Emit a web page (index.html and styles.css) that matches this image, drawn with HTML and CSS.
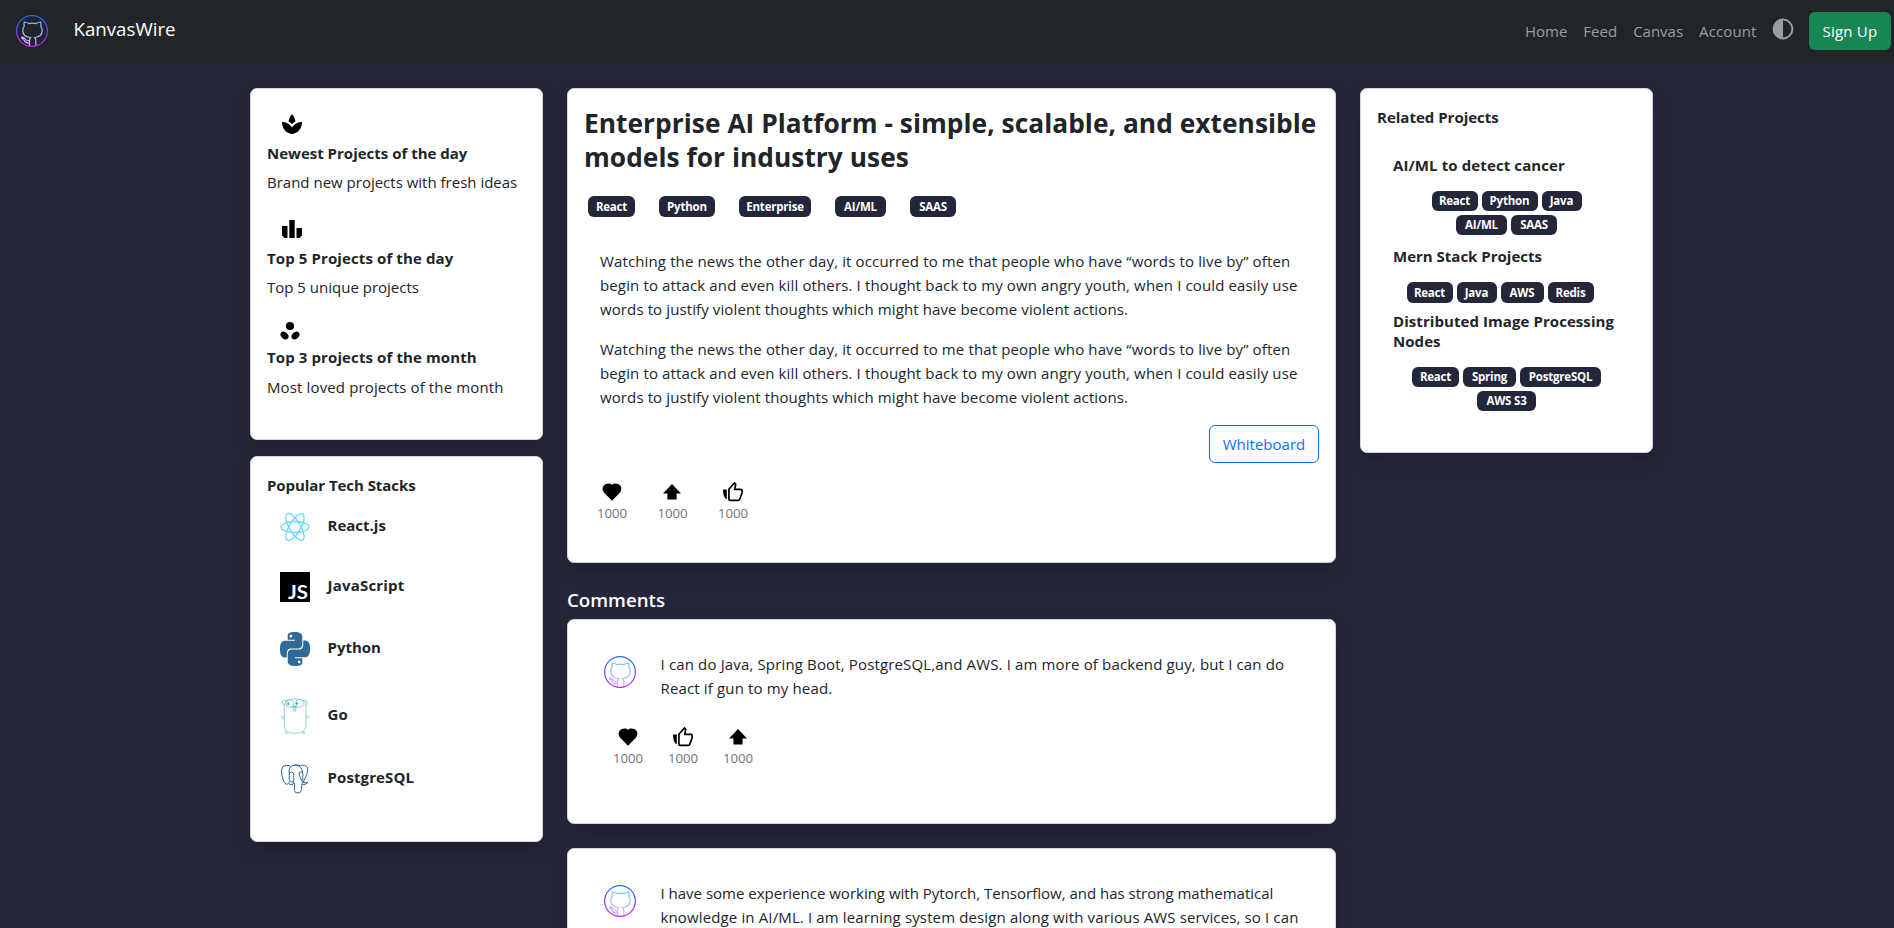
FILE: index.html
```html
<!DOCTYPE html>
<html lang="en">
<head>
<meta charset="utf-8">
<title>KanvasWire</title>
<link rel="stylesheet" href="styles.css">
</head>
<body>
<svg class="defs" width="0" height="0" aria-hidden="true">
  <defs>
    <linearGradient id="ring" x1="0" y1="0" x2="0" y2="1"><stop offset="0" stop-color="#1a6dff"/><stop offset="1" stop-color="#c822ff"/></linearGradient>
    <linearGradient id="cat" gradientUnits="userSpaceOnUse" x1="0" y1="6" x2="0" y2="32"><stop offset="0" stop-color="#6dc7ff"/><stop offset="1" stop-color="#e6abff"/></linearGradient>
    <symbol id="octo" viewBox="0 0 32 32">
      <path d="M13.500 31V25.500Q13.500 23.500 14.500 22.500C9.500 22 6.800 19.500 6.800 15.500Q6.800 13 8.300 11.200Q7.600 9 8.300 7Q10.500 7 12.800 8.600Q16.500 7.800 20.200 8.600Q22.500 7 24.700 7Q25.400 9 24.700 11.200Q26.200 13 26.200 15.500C26.200 19.500 23.500 22 18.700 22.500Q19.800 23.500 19.800 25.500V31M13.500 28Q9.500 28.200 8.300 25.500Q7.300 23.500 5 23.200M13.500 25.800Q10.500 26 9.200 24Q8.200 22.200 5.500 21.800" fill="none" stroke="url(#cat)" stroke-width="1.200"/>
      <circle cx="16" cy="16" r="15.400" fill="none" stroke="url(#ring)" stroke-width="1.200"/>
    </symbol>
    <symbol id="heart" viewBox="0 0 24 24"><path d="M12 20.700L4.200 12.800C1.600 10 2.300 5.500 5.700 4.100C8 3.200 10.500 3.400 12 4.900C13.500 3.400 16 3.200 18.300 4.100C21.700 5.500 22.400 10 19.800 12.800Z"/></symbol>
    <symbol id="arrow" viewBox="0 0 24 24"><path d="M12 4L21 13.600H16.600V19.500H7.400V13.600H3Z"/></symbol>
    <symbol id="thumb" viewBox="0 0 24 24"><path d="M9 20.300H17.200Q18.300 20.300 18.700 19.200L21.100 12.800V10.600Q21.100 9.400 19.900 9.400H13.700L14.700 4.300L13.400 3L7.900 9.200V19.200Q7.900 20.300 9 20.300Z" fill="none" stroke="#000" stroke-width="1.700"/><path d="M2 9.500H5.800V19H5C3 17.500 2 14 2 9.500Z"/></symbol>
  </defs>
</svg>

<header class="nav">
  <svg class="avatar"><use href="#octo"/></svg>
  <span class="brand">KanvasWire</span>
  <nav class="links"><a>Home</a><a>Feed</a><a>Canvas</a><a class="s1">Account</a></nav>
  <svg class="contrast" viewBox="0 0 22 22"><circle cx="11" cy="11" r="9.400" fill="none" stroke="#9b9d9f" stroke-width="2"/><path d="M11 1A10 10 0 0 0 11 21Z" fill="#9b9d9f"/></svg>
  <button class="signup s3">Sign Up</button>
</header>

<main class="page">
  <aside class="side">
    <section class="card highlights">
      <div class="hl">
        <svg class="ic" viewBox="0 0 24 24"><path d="M12 2C10.100 4.300 8.900 6.900 8.600 9.600C9.800 10.200 11 11 12 12.200C13 11 14.200 10.200 15.400 9.600C15.100 6.900 13.900 4.300 12 2ZM12 15.500C9.900 12.200 6.200 10 2 10C2 15.500 5 20 9.800 21.600C11.200 22.100 12.800 22.100 14.200 21.600C19 20 22 15.500 22 10C17.800 10 14.100 12.200 12 15.500Z"/></svg>
        <h4>Newest Projects of the day</h4><p>Brand new projects with fresh ideas</p>
      </div>
      <div class="hl">
        <svg class="ic" viewBox="0 0 24 24"><path d="M2 9H7.500V21H4.500L2 18.500ZM9.300 3H14.700V21H9.300ZM16.500 11H22V18.500L19.500 21H16.500Z"/></svg>
        <h4 class="s1">Top 5 Projects of the day</h4><p>Top 5 unique projects</p>
      </div>
      <div class="hl last">
        <svg class="ic" viewBox="0 0 24 24"><circle cx="12" cy="8" r="4.100"/><ellipse cx="6.500" cy="17.500" rx="4.500" ry="3.200" transform="rotate(42 6.500 17.500)"/><ellipse cx="17.500" cy="17.500" rx="4.500" ry="3.200" transform="rotate(-42 17.500 17.500)"/></svg>
        <h4 class="s1">Top 3 projects of the month</h4><p class="s2">Most loved projects of the month</p>
      </div>
    </section>

    <section class="card stacks">
      <h4 class="n1">Popular Tech Stacks</h4>
      <div class="tech">
        <svg width="30" height="30" viewBox="0 0 30 30" fill="none" stroke="#61dafb" stroke-width="1.300"><ellipse cx="15" cy="15" rx="14" ry="5.500"/><ellipse cx="15" cy="15" rx="15.300" ry="5.600" transform="rotate(60 15 15)"/><ellipse cx="15" cy="15" rx="15.300" ry="5.600" transform="rotate(120 15 15)"/></svg>
        <h4>React.js</h4>
      </div>
      <div class="tech">
        <svg width="30" height="30" viewBox="0 0 30 30"><path d="M0 0H30V30H0Z"/><text class="js" x="8" y="27.300" textLength="20" lengthAdjust="spacingAndGlyphs">JS</text></svg>
        <h4 class="s3">JavaScript</h4>
      </div>
      <div class="tech py">
        <svg width="30" height="34" viewBox="0 0 24 24" preserveAspectRatio="none" fill="#306998"><path d="M14.250.18l.9.2.73.26.59.3.45.32.34.34.25.34.16.33.1.3.04.26.02.2-.01.13V8.500l-.05.63-.13.55-.21.46-.26.38-.3.31-.33.25-.35.19-.35.14-.33.1-.3.07-.26.04-.21.02H8.770l-.69.05-.59.14-.5.22-.41.27-.33.32-.27.35-.2.36-.15.37-.1.35-.07.32-.04.27-.02.21v3.060H3.170l-.21-.03-.28-.07-.32-.12-.35-.18-.36-.26-.36-.36-.35-.46-.32-.59-.28-.73-.21-.88-.14-1.050-.05-1.230.06-1.220.16-1.040.24-.87.32-.71.36-.57.4-.44.42-.33.42-.24.4-.16.36-.1.32-.05.24-.01h.16l.06.01h8.160v-.83H6.180l-.01-2.750-.02-.37.05-.34.11-.31.17-.28.25-.26.31-.23.38-.2.44-.18.51-.15.58-.12.64-.1.71-.06.77-.04.84-.02 1.270.05zm-6.300 1.980l-.23.33-.08.41.08.41.23.34.33.22.41.09.41-.09.33-.22.23-.34.08-.41-.08-.41-.23-.33-.33-.22-.41-.09-.41.09zm13.090 3.950l.28.06.32.12.35.18.36.27.36.35.35.47.32.59.28.73.21.88.14 1.040.05 1.230-.06 1.230-.16 1.040-.24.86-.32.71-.36.57-.4.45-.42.33-.42.24-.4.16-.36.09-.32.05-.24.02-.16-.01h-8.220v.82h5.840l.01 2.760.02.36-.05.34-.11.31-.17.29-.25.25-.31.24-.38.2-.44.17-.51.15-.58.13-.64.09-.71.07-.77.04-.84.01-1.270-.04-1.070-.14-.9-.2-.73-.25-.59-.3-.45-.33-.34-.34-.25-.34-.16-.33-.1-.3-.04-.25-.02-.2.01-.13v-5.340l.05-.64.13-.54.21-.46.26-.38.3-.32.33-.24.35-.2.35-.14.33-.1.3-.06.26-.04.21-.02.13-.01h5.840l.69-.05.59-.14.5-.21.41-.28.33-.32.27-.35.2-.36.15-.36.1-.35.07-.32.04-.28.02-.21V6.070h2.090l.14.01zm-6.470 14.250l-.23.33-.08.41.08.41.23.33.33.23.41.08.41-.08.33-.23.23-.33.08-.41-.08-.41-.23-.33-.33-.23-.41-.08-.41.08z"/></svg>
        <h4>Python</h4>
      </div>
      <div class="tech go">
        <svg width="30" height="36" viewBox="0 0 30 36" fill="none" stroke="#76c7d6" stroke-width=".8"><path d="M5 4Q10 .7 15 .7Q21 .7 25 4Q26.500 7 26 14V28Q25.500 35.300 15 35.300Q4.500 35.300 4.300 28V12Q3.500 7 5 4ZM5 7.500Q1.500 6 2.200 3.300Q4 .8 6.800 2.800M25.500 7.500Q28 6 27.300 3.300Q25.500 .8 22.800 2.800M4.200 18.500Q1 18.300 1.500 20Q2.500 21.200 4.200 20.500M26 18Q28.600 17.500 28.400 19.200Q27.800 20.500 26 20M6.500 32.500Q4 34.500 5.200 35.500Q6.500 36 8 34M23 33Q25.500 34.500 24.600 35.500Q23 36 21.500 34.500"/><circle cx="9.800" cy="5.600" r="4"/><circle cx="19.600" cy="5.400" r="4"/><path d="M12.500 9.500Q14.600 7.700 16.700 9.500Q17 11 14.700 11Q12.300 11 12.500 9.500ZM13.300 11V12.800H15.700V11"/><circle cx="8.300" cy="5.700" r="1.200" fill="#2db1cc" stroke="none"/><circle cx="17" cy="5.500" r="1.200" fill="#2db1cc" stroke="none"/><ellipse cx="14.600" cy="8.700" rx="1.300" ry=".9" fill="#2db1cc" stroke="none"/></svg>
        <h4 class="s3">Go</h4>
      </div>
      <div class="tech">
        <svg width="30" height="30" viewBox="0 0 30 30" fill="none" stroke="#336791" stroke-width="1"><path d="M10.500 2Q6 .3 2.800 2.500Q.6 5 2 11.500Q3.800 19.300 6.200 20.300Q7.500 20.500 10 17.500M10.500 17.500Q8.700 16 9.200 13Q9.600 10 9 7Q9.500 1.700 14.500 1.200Q20 .8 22 6Q23.500 10 22.800 13.500Q22.500 16.500 23.500 18.500M12 1.500Q17 .2 20.500 1.700Q25 .3 27.300 3Q28.700 6.500 25 14.500Q24 16.500 23.500 18.300Q25 19.300 28 18.300Q26.500 20.800 22.500 20.600M14.500 19V26.500Q15 29.200 18 29Q21.300 28.800 21.500 25.500L22 19Q22.300 17.500 23.500 18.500M9.300 8.500Q12 7.400 13.500 9Q14.300 11 13.500 13.500Q14.500 16 13.500 17.500Q12 18.700 10.500 17.500M13.500 17.500Q14 20.500 12 20.700Q10 20.900 8.500 19.500M22.700 8.500Q20.500 7.400 19 9Q19 11 20.300 13.500Q21 16.500 22.500 17.500"/></svg>
        <h4 class="s1">PostgreSQL</h4>
      </div>
    </section>
  </aside>

  <div class="center">
    <article class="card post">
      <h1>Enterprise AI Platform - simple, scalable, and extensible<br>models for industry uses</h1>
      <div class="tags"><b class="w47">React</b><b class="w56">Python</b><b class="w72">Enterprise</b><b class="w51">AI/ML</b><b class="w46">SAAS</b></div>
      <div class="copy s2">
        <p>Watching the news the other day, it occurred to me that people who have “words to live by” often<br>begin to attack and even kill others. I thought back to my own angry youth, when I could easily use<br><span class="s1">words to justify violent thoughts which might have become violent actions.</span></p>
        <p>Watching the news the other day, it occurred to me that people who have “words to live by” often<br>begin to attack and even kill others. I thought back to my own angry youth, when I could easily use<br><span class="s1">words to justify violent thoughts which might have become violent actions.</span></p>
      </div>
      <button class="board">Whiteboard</button>
      <div class="votes">
        <div><svg><use href="#heart"/></svg>1000</div><div><svg><use href="#arrow"/></svg>1000</div><div><svg><use href="#thumb"/></svg>1000</div>
      </div>
    </article>
    <h2>Comments</h2>
    <article class="card comment">
      <div class="said"><svg class="avatar"><use href="#octo"/></svg><p class="s25">I can do Java, Spring Boot, PostgreSQL,and AWS. I am more of backend guy, but I can do<br>React if gun to my head.</p></div>
      <div class="votes">
        <div><svg><use href="#heart"/></svg>1000</div><div><svg><use href="#thumb"/></svg>1000</div><div><svg><use href="#arrow"/></svg>1000</div>
      </div>
    </article>
    <article class="card comment">
      <div class="said"><svg class="avatar"><use href="#octo"/></svg><p>I have some experience working with Pytorch, Tensorflow, and has strong mathematical<br><span class="s2">knowledge in AI/ML. I am learning system design along with various AWS services, so I can</span></p></div>
    </article>
  </div>

  <aside class="side">
    <section class="card related">
      <h4>Related Projects</h4>
      <div class="project">
        <h4 class="s1">AI/ML to detect cancer</h4>
        <div class="tags"><b class="w46">React</b><b class="w56">Python</b><b class="w40">Java</b></div>
        <div class="tags"><b class="w51">AI/ML</b><b class="w46">SAAS</b></div>
      </div>
      <div class="project mern">
        <h4>Mern Stack Projects</h4>
        <div class="tags"><b class="w46">React</b><b class="w40">Java</b><b class="w43">AWS</b><b class="w46">Redis</b></div>
      </div>
      <div class="project dist">
        <h4 class="s0">Distributed Image Processing<br>Nodes</h4>
        <div class="tags"><b class="w47">React</b><b class="w53">Spring</b><b class="w81">PostgreSQL</b></div>
        <div class="tags"><b class="w59">AWS S3</b></div>
      </div>
    </section>
  </aside>
</main>
</body>
</html>
```
FILE: styles.css
```css
* { box-sizing: border-box; }
body {
  margin: 0;
  height: 928px;
  overflow: hidden;
  background: #24263a;
  color: #212529;
  font: 15px/24px "Open Sans", "Noto Sans", sans-serif;
}
h1, h2, h4, p { margin: 0; white-space: nowrap; }
h4 { font-size: 15px; line-height: 20px; font-weight: 700; }
svg { display: block; flex: none; }
button { font: inherit; padding: 0; border-radius: 6px; height: 38px; }
.defs { position: absolute; }

/* tracking steps */
.n1 { letter-spacing: -.06px; }
.s0 { letter-spacing: .07px; }
.s1 { letter-spacing: .11px; }
.s2 { letter-spacing: .133px; }
.s25 { letter-spacing: .148px; }
.s3 { letter-spacing: .2px; }

.nav { height: 64px; background: #212529; display: flex; align-items: center; padding: 0 3px 2px 16px; }
.avatar { width: 32px; height: 32px; }
.brand { color: #fff; font-size: 18.700px; margin: -5px auto 0 25.500px; }
.links { display: flex; gap: 16px; color: #9b9d9f; }
.contrast { width: 22px; height: 22px; margin: -4px 15px 0 15.500px; }
.signup { width: 82px; border: 0; background: #198754; color: #fff; }

.page { display: flex; gap: 24px; padding: 24px 0 0 250px; height: 864px; overflow: hidden; }
.side { width: 293px; display: flex; flex-direction: column; gap: 16px; }
.center { width: 769px; }
.card { background: #fff; border: 1px solid #d3d3d8; border-radius: 7px; padding: 0 16px; box-shadow: 0 8px 16px rgba(0, 0, 0, .15); }

.highlights { height: 352px; padding-top: 23px; }
.hl { margin-bottom: 23px; }
.hl .ic { width: 24px; height: 24px; margin: 0 0 7px 13px; }
.hl h4 { margin-bottom: 7px; }
.last { margin-top: -4px; }
.last .ic { margin: 0 0 5px 11px; }
.last h4 { margin-bottom: 8px; }

.stacks { height: 386px; padding-top: 18px; }
.stacks > h4 { margin-bottom: 17px; }
.tech { display: flex; align-items: center; gap: 17.500px; margin: 0 0 30px 13px; }
.tech h4 { margin-top: -4px; }
.py { margin-bottom: 32px; }
.go { margin-bottom: 30px; }
.js { font: 700 19px Lato, sans-serif; fill: #fff; }

.post { height: 475px; padding-top: 17px; display: flex; flex-direction: column; }
h1 { font-size: 26.300px; line-height: 34px; letter-spacing: .04px; }
.tags { display: flex; gap: 4px; }
.tags b { height: 20px; border-radius: 6px; background: #24263a; color: #fff; font-size: 11.500px; line-height: 20px; text-align: center; letter-spacing: -.2px; white-space: nowrap; }
.post .tags { gap: 24px; margin: 22px 0 32px 4px; }
.post .tags b, .mern .tags b { height: 21px; line-height: 21px; }
.w40 { width: 40px; } .w43 { width: 43px; } .w46 { width: 46px; } .w47 { width: 47px; }
.w51 { width: 51px; } .w53 { width: 53px; } .w56 { width: 56px; } .w59 { width: 59px; }
.w72 { width: 72px; } .w81 { width: 81px; }
.copy { padding-left: 16px; display: flex; flex-direction: column; gap: 16px; }
.board { align-self: flex-end; width: 110px; margin-top: 16px; border: 1px solid #0d6efd; background: #fff; color: #0d6efd; }
.votes { display: flex; gap: 31px; margin: 17px 0 0 13px; font-size: 13.200px; line-height: 20px; color: #6c757d; }
.votes div { width: 29.500px; }
.votes svg { width: 24px; height: 24px; margin: 0 0 -1px 2.500px; fill: #000; }

h2 { color: #fff; font-size: 18.700px; line-height: 24px; font-weight: 600; margin: 25px 0 7px; }
.comment { height: 205px; padding: 32px 16px 0 36px; margin-bottom: 24px; }
.said { display: flex; gap: 24.500px; align-items: flex-start; }
.said .avatar { margin-top: 4px; }
.comment .votes { gap: 25.500px; margin: 25px 0 0 9px; }

.related { height: 365px; padding-top: 18px; }
.project { padding: 0 16px; margin-top: 28px; }
.project h4 { margin-bottom: 16px; }
.project .tags { justify-content: center; margin-bottom: 4px; }
.mern { margin-top: 11px; }
.mern .tags { margin-left: -13px; }
.dist { margin-top: 8px; }
```
